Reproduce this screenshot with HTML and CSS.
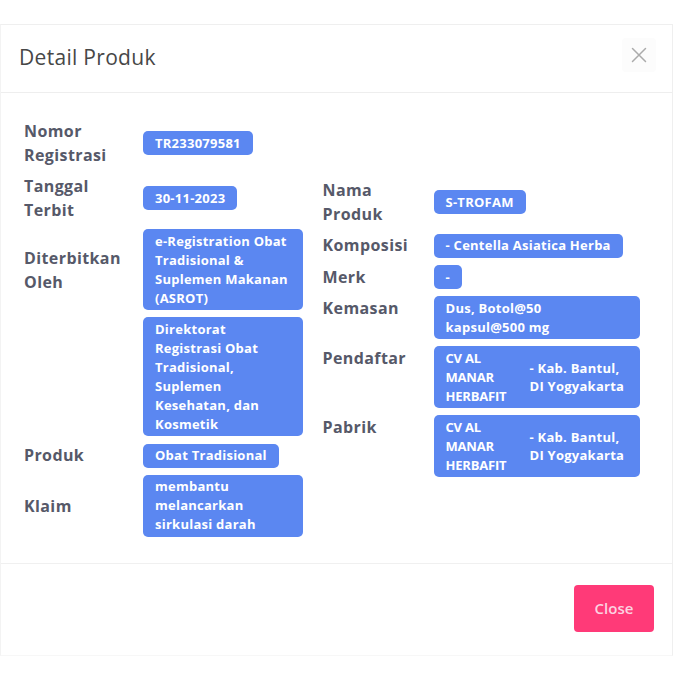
FILE: index.html
```html
<!DOCTYPE html>
<html lang="id">
<head>
<meta charset="utf-8">
<title>Detail Produk</title>
<link rel="stylesheet" href="styles.css">
</head>
<body>
<div class="modal">
  <div class="modal-header">
    <h5 class="modal-title">Detail Produk</h5>
    <button class="btn-x" type="button" aria-label="Close">
      <svg viewBox="0 0 16 16" width="16" height="16"><path d="M1.5 1.5 L14.5 14.5 M14.5 1.5 L1.5 14.5" stroke="#ababab" stroke-width="1.5" stroke-linecap="round" fill="none"/></svg>
    </button>
  </div>
  <div class="modal-body">
    <div class="col col-left">
      <div class="row"><div class="label">Nomor Registrasi</div><div class="val"><span class="badge">TR233079581</span></div></div>
      <div class="row"><div class="label">Tanggal Terbit</div><div class="val"><span class="badge">30-11-2023</span></div></div>
      <div class="row"><div class="label">Diterbitkan Oleh</div><div class="val"><span class="badge">e-Registration Obat Tradisional &amp; Suplemen Makanan (ASROT)</span></div></div>
      <div class="row"><div class="label"></div><div class="val"><span class="badge">Direktorat Registrasi Obat Tradisional, Suplemen Kesehatan, dan Kosmetik</span></div></div>
      <div class="row"><div class="label">Produk</div><div class="val"><span class="badge">Obat Tradisional</span></div></div>
      <div class="row"><div class="label">Klaim</div><div class="val"><span class="badge">membantu melancarkan sirkulasi darah</span></div></div>
    </div>
    <div class="col col-right">
      <div class="row"><div class="label">Nama Produk</div><div class="val"><span class="badge">S-TROFAM</span></div></div>
      <div class="row"><div class="label">Komposisi</div><div class="val"><span class="badge">- Centella Asiatica Herba</span></div></div>
      <div class="row"><div class="label">Merk</div><div class="val"><span class="badge">-</span></div></div>
      <div class="row row-top"><div class="label">Kemasan</div><div class="val"><span class="badge">Dus, Botol@50 kapsul@500&nbsp;mg</span></div></div>
      <div class="row row-top"><div class="label">Pendaftar</div><div class="val"><div class="badge badge-split"><span class="b-name">CV AL MANAR HERBAFIT</span><span class="b-addr">- Kab. Bantul, DI Yogyakarta</span></div></div></div>
      <div class="row row-top"><div class="label">Pabrik</div><div class="val"><div class="badge badge-split"><span class="b-name">CV AL MANAR HERBAFIT</span><span class="b-addr">- Kab. Bantul, DI Yogyakarta</span></div></div></div>
    </div>
  </div>
  <div class="modal-footer">
    <button class="btn-close" type="button">Close</button>
  </div>
</div>
</body>
</html>
```

FILE: styles.css
```css
* { box-sizing: border-box; }
html, body { margin: 0; padding: 0; background: #ffffff; }
body {
  font-family: "Open Sans", "Noto Sans", "DejaVu Sans", sans-serif;
  width: 675px;
  height: 675px;
  overflow: hidden;
}
.modal {
  margin-top: 24px;
  width: 673px;
  border: 1px solid #efefef;
  border-left-color: #f3f3f3;
  border-bottom-color: #f7f7f7;
  background: #fff;
}
.modal-header {
  display: flex;
  align-items: center;
  justify-content: space-between;
  padding: 17px 16px 20px 18px;
  border-bottom: 1px solid #eeeeee;
}
.modal-title {
  margin: 0;
  font-size: 21px;
  line-height: 30px;
  font-weight: 500;
  color: #474747;
  letter-spacing: 0.3px;
}
.btn-x {
  width: 34px;
  height: 34px;
  border: 0;
  background: #fcfcfc;
  border-radius: 4px;
  display: flex;
  align-items: center;
  justify-content: center;
  padding: 0;
  margin-top: -4px;
}
.modal-body {
  display: flex;
  gap: 20px;
  padding: 26px 32px 26px 23px;
}
.col {
  display: flex;
  flex-direction: column;
  gap: 7px;
}
.col-left { width: 279px; }
.col-right { width: 318px; padding-top: 59px; }
.row {
  display: grid;
  grid-template-columns: 105px 1fr;
  column-gap: 14px;
  align-items: center;
}
.col-right .row { grid-template-columns: 97px 1fr; }
.row-top { align-items: start; }
.label {
  font-size: 16px;
  line-height: 24px;
  font-weight: 700;
  letter-spacing: 0.4px;
  color: #565969;
}
.val { min-width: 0; }
.badge {
  display: inline-block;
  background: #5b87f1;
  color: #ffffff;
  font-size: 13px;
  font-weight: 700;
  letter-spacing: 0.25px;
  line-height: 19px;
  padding: 2.5px 12px;
  border-radius: 5px;
}
.badge-split {
  display: flex;
  align-items: center;
  gap: 18px;
}
.b-name { width: 66px; flex: none; line-height: 19px; letter-spacing: -0.2px; }
.b-addr { line-height: 18px; }
.modal-footer {
  display: flex;
  justify-content: flex-end;
  padding: 21px 18px 23px;
  border-top: 1px solid #f0f0f0;
}
.btn-close {
  width: 80px;
  height: 47px;
  border: 0;
  border-radius: 4px;
  background: #ff3a78;
  color: #fcd2e0;
  font-family: "Open Sans", "Noto Sans", sans-serif;
  font-size: 15px;
  font-weight: 600;
}
```
